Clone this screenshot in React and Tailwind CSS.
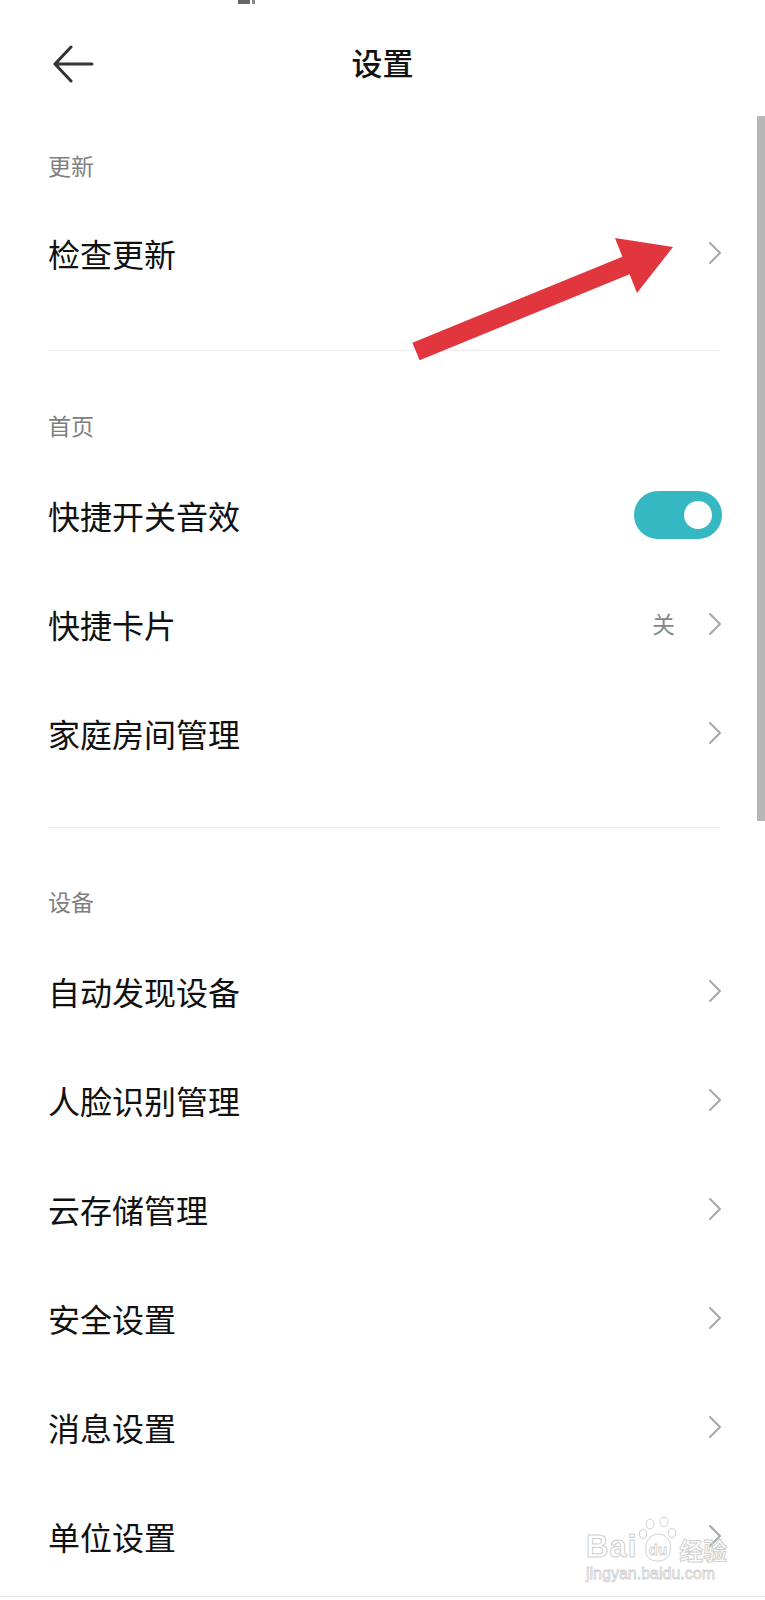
import React from "react";

const Chevron = () => (
  <svg width="14" height="24" viewBox="0 0 14 24" className="shrink-0">
    <path
      d="M2 2 L12 12 L2 22"
      fill="none"
      stroke="#a8a8a8"
      strokeWidth="2"
      strokeLinecap="round"
      strokeLinejoin="round"
    />
  </svg>
);

function Row({ label, value, toggle }) {
  return (
    <div className="flex h-[109px] items-center justify-between pl-[48px] pr-[43px]">
      <span className="text-[32px] leading-none text-[#111]">{label}</span>
      {toggle ? (
        <div className="flex h-[48px] w-[88px] items-center justify-end rounded-full bg-[#35b8c1] pr-[10px]">
          <div className="h-[28px] w-[28px] rounded-full bg-white" />
        </div>
      ) : (
        <div className="flex items-center gap-[33px]">
          {value && (
            <span className="text-[23px] leading-none text-[#888]">{value}</span>
          )}
          <Chevron />
        </div>
      )}
    </div>
  );
}

function Header({ children, className = "h-[50px]" }) {
  return (
    <div className={`pl-[48px] text-[23px] leading-[30px] text-[#7f7f7f] ${className}`}>
      {children}
    </div>
  );
}

const Divider = ({ className }) => (
  <div className={`ml-[48px] mr-[46px] h-px bg-[#ececec] ${className}`} />
);

export default function App() {
  return (
    <div className="relative h-[1600px] w-full overflow-hidden bg-white font-['Noto_Sans_CJK_SC','Noto_Sans',sans-serif]">
      {/* status bar remnant */}
      <div className="absolute left-[238px] top-0 flex gap-[2px]">
        <div className="h-[4px] w-[12px] bg-[#666]" />
        <div className="h-[4px] w-[3px] bg-[#888]" />
      </div>

      {/* title bar */}
      <div className="flex h-[128px] items-center px-[52px]">
        <svg width="42" height="38" viewBox="0 0 42 38" className="shrink-0">
          <path
            d="M40 19 H3 M19 2 L3 19 L19 36"
            fill="none"
            stroke="#333"
            strokeWidth="3"
            strokeLinecap="round"
            strokeLinejoin="round"
          />
        </svg>
        <div className="flex-1 pb-[6px] text-center text-[31px] font-medium leading-none text-[#111]">
          设置
        </div>
        <div className="w-[42px] shrink-0" />
      </div>

      <div className="pt-[22px]">
        <Header className="h-[48px]">更新</Header>
        <Row label="检查更新" />
      </div>
      <Divider className="mt-[43px]" />

      <div className="pt-[59px]">
        <Header>首页</Header>
        <Row label="快捷开关音效" toggle />
        <Row label="快捷卡片" value="关" />
        <Row label="家庭房间管理" />
      </div>
      <Divider className="mt-[40px]" />

      <div className="pt-[58px]">
        <Header>设备</Header>
        <Row label="自动发现设备" />
        <Row label="人脸识别管理" />
        <Row label="云存储管理" />
        <Row label="安全设置" />
        <Row label="消息设置" />
        <Row label="单位设置" />
      </div>
      <div className="mt-[6px] h-px bg-[#e6e6e6]" />

      {/* scrollbar */}
      <div className="absolute right-0 top-[116px] h-[705px] w-[8px] bg-[#b7b7b7]" />

      {/* red annotation arrow */}
      <svg
        className="pointer-events-none absolute left-0 top-0"
        width="765"
        height="400"
        viewBox="0 0 765 400"
      >
        <polygon
          points="412.4,342.7 622.4,256.7 615,238 673,247 637,293 629.6,274.3 419.6,360.3"
          fill="#e2363f"
        />
      </svg>

      {/* watermark */}
      <div className="pointer-events-none absolute left-[586px] top-[1516px] flex flex-col">
        <div className="flex items-end">
          <span className="font-['Liberation_Sans',sans-serif] text-[31px] font-bold leading-none tracking-[1px] text-transparent [-webkit-text-stroke:1px_#cfcfcf]">
            Bai
          </span>
          <svg width="40" height="46" viewBox="0 0 40 46" className="mx-[1px]">
            <g fill="none" stroke="#cfcfcf" strokeWidth="1">
              <ellipse cx="12" cy="8" rx="4" ry="5" />
              <ellipse cx="26" cy="6" rx="4" ry="5" />
              <ellipse cx="5" cy="18" rx="3.5" ry="4.5" />
              <ellipse cx="34" cy="17" rx="3.5" ry="4.5" />
              <path d="M8 36 C6 24 14 18 20 18 C28 18 34 24 32 36 C31 43 24 45 20 45 C14 45 9 43 8 36 Z" />
            </g>
            <text
              x="20"
              y="39"
              textAnchor="middle"
              fontFamily="Liberation Sans, sans-serif"
              fontSize="15"
              fontWeight="700"
              fill="none"
              stroke="#cfcfcf"
              strokeWidth="0.8"
            >
              du
            </text>
          </svg>
          <span className="text-[24px] font-bold leading-none text-transparent [-webkit-text-stroke:1px_#cfcfcf]">
            经验
          </span>
        </div>
        <span className="mt-[4px] font-['Liberation_Sans',sans-serif] text-[16px] leading-none text-transparent [-webkit-text-stroke:0.8px_#cfcfcf]">
          jingyan.baidu.com
        </span>
      </div>
    </div>
  );
}
